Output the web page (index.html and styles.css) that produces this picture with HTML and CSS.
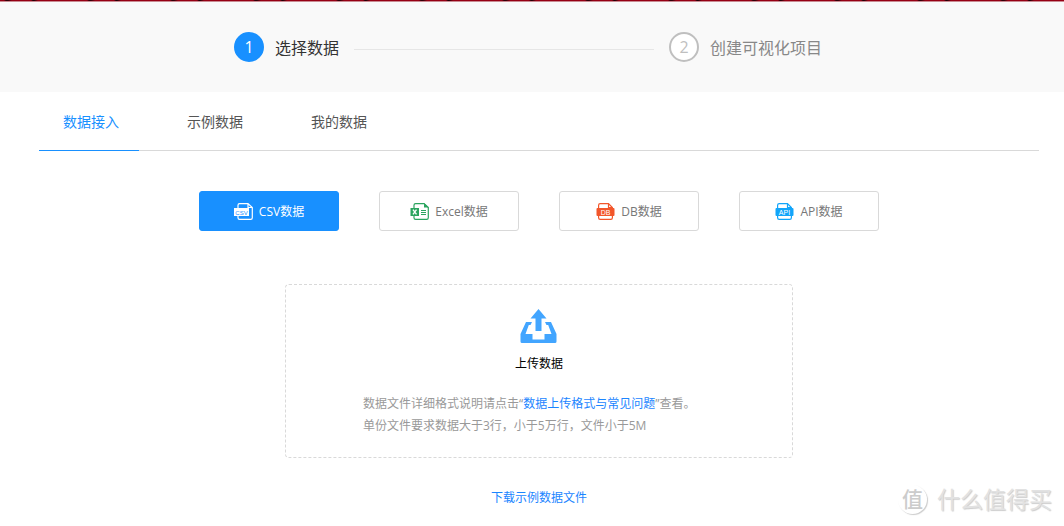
FILE: index.html
```html
<!DOCTYPE html>
<html lang="zh-CN">
<head>
<meta charset="utf-8">
<title>选择数据</title>
<link rel="stylesheet" href="styles.css">
</head>
<body>
<div class="top-strip"></div>
<header class="steps-bar">
  <ol class="steps">
    <li class="step step-active"><span class="step-number">1</span><span class="step-label">选择数据</span></li>
    <li class="step-line" role="presentation"></li>
    <li class="step"><span class="step-number">2</span><span class="step-label">创建可视化项目</span></li>
  </ol>
</header>
<main class="content">
  <nav class="tabs">
    <a class="tab tab-active" href="#import">数据接入</a>
    <a class="tab" href="#samples">示例数据</a>
    <a class="tab" href="#mine">我的数据</a>
  </nav>
  <div class="sources">
    <button class="source source-active" type="button">
      <svg class="source-icon" viewBox="0 0 19 17" aria-hidden="true">
        <path d="M4 5V2.200Q4 .6 5.600 .6H14L18.300 4.500V14.800Q18.300 16.400 16.700 16.400H5.600Q4 16.400 4 14.800V13M14 .8V4.500H18" fill="none" stroke="#fff" stroke-width="1.200"/>
        <rect y="5" width="15" height="8" fill="#fff"/>
        <text class="icon-text icon-csv" x="7.500" y="11.500">CSV</text>
      </svg>
      <span>CSV数据</span>
    </button>
    <button class="source" type="button">
      <svg class="source-icon" viewBox="0 0 19 17" aria-hidden="true">
        <path d="M4 5V2.200Q4 .6 5.600 .6H14L18.300 4.500V14.800Q18.300 16.400 16.700 16.400H5.600Q4 16.400 4 14.800V13" fill="none" stroke="#2ba45f" stroke-width="1.200"/>
        <path d="M14 0L19 4.500H14Z" fill="#2ba45f"/>
        <rect x="0.500" y="5" width="8.500" height="8" fill="#2ba45f"/>
        <path d="M3 6.700L6.500 11.300M6.500 6.700L3 11.300" stroke="#fff" stroke-width="1.400"/>
        <path d="M11 7.500H16M11 9.500H16M11 11.500H16" stroke="#2ba45f"/>
      </svg>
      <span>Excel数据</span>
    </button>
    <button class="source" type="button">
      <svg class="source-icon" viewBox="0 0 19 17" aria-hidden="true">
        <path d="M2.600 5V2.200Q2.600 .6 4.200 .6H12.500L16.400 4.500V5M2.600 13V14.800Q2.600 16.400 4.200 16.400H14.800Q16.400 16.400 16.400 14.800V13M12.500 .8V4.500H16" fill="none" stroke="#f2562b" stroke-width="1.200"/>
        <rect x="0.500" y="5" width="18" height="8" rx="1" fill="#f2562b"/>
        <text class="icon-text" x="9.500" y="11.500">DB</text>
      </svg>
      <span>DB数据</span>
    </button>
    <button class="source" type="button">
      <svg class="source-icon" viewBox="0 0 19 17" aria-hidden="true">
        <path d="M2.600 5V2.200Q2.600 .6 4.200 .6H12.500L16.400 4.500V5M2.600 13V14.800Q2.600 16.400 4.200 16.400H14.800Q16.400 16.400 16.400 14.800V13M12.500 .8V4.500H16" fill="none" stroke="#12a5fa" stroke-width="1.200"/>
        <rect x="0.500" y="5" width="18" height="8" rx="1" fill="#12a5fa"/>
        <text class="icon-text" x="9.500" y="11.500">API</text>
      </svg>
      <span>API数据</span>
    </button>
  </div>
  <section class="dropzone">
    <button class="upload" type="button">
      <svg class="upload-icon" viewBox="0 0 37 34" aria-hidden="true">
        <path d="M6 13H12L10.500 16H8.800L5.500 25H12.500V30.500H24.500V25H31.500L28.200 16H26.500L25 13H31L36.500 25V32.500Q36.500 34 35 34H2Q.5 34 .5 32.500V25Z" fill="#42a5ff"/>
        <path d="M18.500 0L26.500 9.500H21.500V22H15.500V9.500H10.500Z" fill="#42a5ff"/>
      </svg>
      <span>上传数据</span>
    </button>
    <p class="hint">数据文件详细格式说明请点击“<a class="link" href="#help">数据上传格式与常见问题</a>”查看。<br>单份文件要求数据大于3行，小于5万行，文件小于5M</p>
  </section>
  <a class="link download" href="#sample-file">下载示例数据文件</a>
</main>
<div class="watermark"><span class="watermark-badge">值</span><span>什么值得买</span></div>
</body>
</html>
```
FILE: styles.css
```css
* {
  box-sizing: border-box;
}

body {
  margin: 0;
  background: #fff;
  color: #444;
  font: 12px/22px "Open Sans", "Noto Sans CJK SC", sans-serif;
}

a {
  text-decoration: none;
}

button {
  font: inherit;
  cursor: pointer;
}

.top-strip {
  height: 2px;
  border-bottom: 1px solid #c98a92;
  background: repeating-linear-gradient(90deg, #960014 0 4px, #300008 6px 8px, #960014 12px 31px, #200006 33px 34px, #960014 38px 83px);
}

.steps-bar {
  padding: 30px 8px 30px 0;
  background: #f9f9f9;
}

.steps {
  display: flex;
  justify-content: center;
  align-items: center;
  margin: 0;
  padding: 0;
  list-style: none;
}

.step {
  display: flex;
  align-items: center;
  gap: 11px;
  color: #888;
  font-size: 16px;
}

.step-label {
  padding-top: 2px;
}

.step-number {
  display: flex;
  align-items: center;
  justify-content: center;
  width: 30px;
  height: 30px;
  border: 2px solid #bfbfbf;
  border-radius: 50%;
  background: #fff;
  color: #bfbfbf;
}

.step-active {
  color: #333;
}

.step-active .step-number {
  border-color: #1890ff;
  background: #1890ff;
  color: #fff;
}

.step-line {
  width: 300px;
  height: 1px;
  margin: 4px 15px 0;
  background: #e6e6e6;
}

.content {
  display: flex;
  flex-direction: column;
  align-items: center;
  padding: 0 25px 16px 39px;
}

.tabs {
  display: flex;
  align-self: stretch;
  gap: 24px;
  border-bottom: 1px solid #d9d9d9;
}

.tab {
  width: 100px;
  margin-bottom: -1px;
  padding: 19px 0 17px 24px;
  border-bottom: 1px solid transparent;
  color: #555;
  font-size: 14px;
  white-space: nowrap;
}

.tab-active {
  border-color: #1890ff;
  color: #1890ff;
}

.sources {
  display: flex;
  gap: 40px;
  margin-top: 40px;
}

.source {
  display: flex;
  align-items: center;
  justify-content: center;
  gap: 6px;
  width: 140px;
  height: 40px;
  padding: 0;
  border: 1px solid #d9d9d9;
  border-radius: 3px;
  background: #fff;
  color: #777;
}

.source span {
  padding-top: 2px;
}

.source-active {
  border-color: #1890ff;
  background: #1890ff;
  color: #fff;
}

.source-icon {
  width: 19px;
  height: 17px;
}

.icon-text {
  fill: #fff;
  font-family: "Liberation Sans", sans-serif;
  font-size: 7px;
  text-anchor: middle;
}

.icon-csv {
  fill: #1890ff;
  font-size: 6px;
}

.dropzone {
  display: flex;
  flex-direction: column;
  align-items: center;
  width: 508px;
  margin-top: 53px;
  padding: 24px 20px 20px;
  border: 1px dashed #d9d9d9;
  border-radius: 4px;
}

.upload {
  display: flex;
  flex-direction: column;
  align-items: center;
  gap: 10px;
  padding: 0;
  border: 0;
  background: none;
  color: #000;
}

.upload-icon {
  width: 37px;
  height: 34px;
}

.hint {
  width: 352px;
  margin: 18px 0 0;
  color: #999;
}

.link {
  color: #1b85ff;
}

.download {
  margin-top: 29px;
}

.watermark {
  position: absolute;
  right: 12px;
  bottom: 12px;
  display: flex;
  align-items: center;
  gap: 10px;
  color: #e2e2e2;
  font-size: 23px;
  line-height: 30px;
  text-shadow: 1px 1px 1px #ccc;
}

.watermark-badge {
  width: 29px;
  height: 29px;
  border-radius: 50%;
  box-shadow: 1px 1px 1px #ccc;
  color: #ccc;
  font-size: 21px;
  font-weight: 500;
  line-height: 28px;
  text-align: center;
  text-shadow: none;
}
```
